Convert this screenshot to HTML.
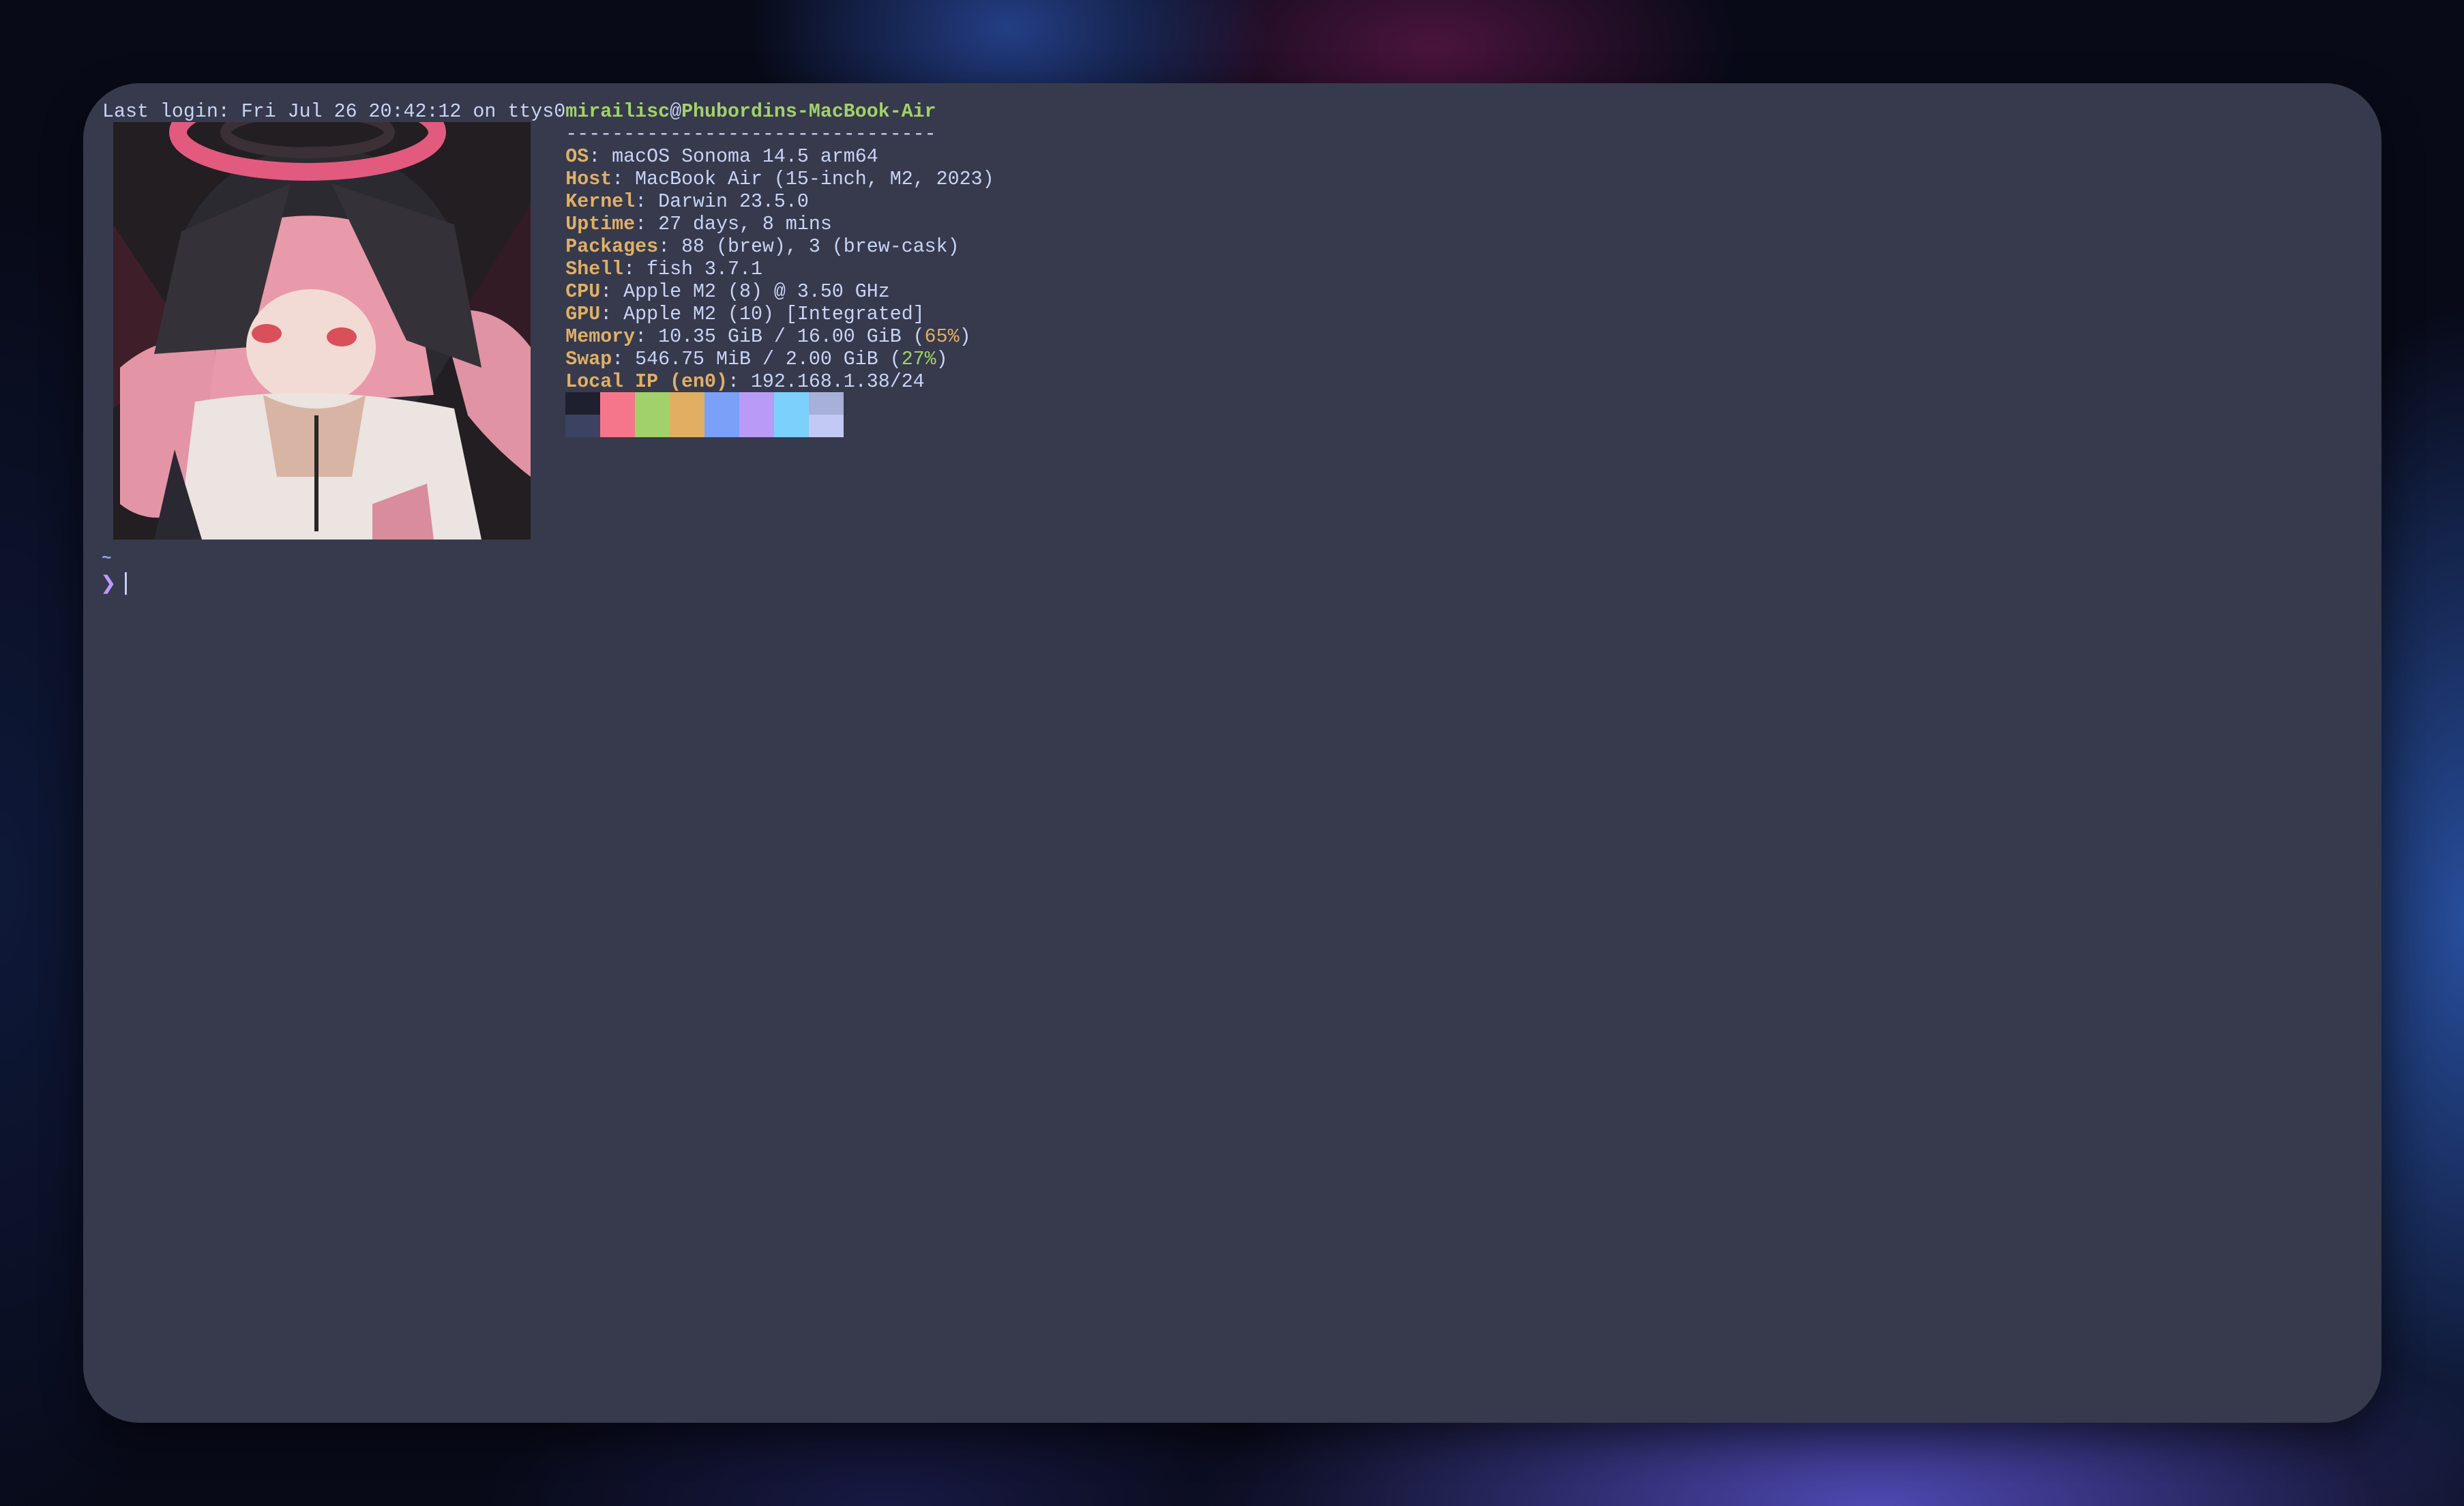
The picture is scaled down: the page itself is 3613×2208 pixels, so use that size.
<!DOCTYPE html>
<html><head><meta charset="utf-8"><style>
html,body{margin:0;padding:0;width:3613px;height:2208px;overflow:hidden;background:#080a18;}
.bg{position:absolute;inset:0;background:
radial-gradient(ellipse 380px 260px at 1480px 40px,rgba(45,80,170,.75),transparent),
radial-gradient(ellipse 450px 240px at 2100px 70px,rgba(110,25,80,.65),transparent),
radial-gradient(ellipse 320px 900px at 3613px 1350px,rgba(45,90,180,.85),transparent),
radial-gradient(ellipse 1000px 320px at 2750px 2208px,rgba(85,80,195,.9),transparent),
radial-gradient(ellipse 600px 220px at 1300px 2208px,rgba(40,40,110,.5),transparent),
radial-gradient(ellipse 350px 1000px at 0px 1300px,rgba(20,40,90,.5),transparent),
#080a18;}
.win{position:absolute;left:122px;top:122px;width:3370px;height:1964px;background:#363a4c;border-radius:82px;box-shadow:0 20px 60px rgba(0,0,0,.45);}
pre{position:absolute;left:150px;top:148px;margin:0;font-family:"Liberation Mono",monospace;font-size:28.3px;line-height:33px;color:#c8d3f5;}
.o{color:#e0af68;font-weight:bold}.g{color:#a3d16a;font-weight:bold}.gr{color:#a3d16a}.y{color:#e0af68}
.blk{position:absolute;width:51px;height:33px}
</style></head><body>
<div class="bg"></div>
<div class="win"></div>
<pre>Last login: Fri Jul 26 20:42:12 on ttys0<span class="g">mirailisc</span>@<span class="g">Phubordins-MacBook-Air</span>
                                        --------------------------------
                                        <span class="o">OS</span>: macOS Sonoma 14.5 arm64
                                        <span class="o">Host</span>: MacBook Air (15-inch, M2, 2023)
                                        <span class="o">Kernel</span>: Darwin 23.5.0
                                        <span class="o">Uptime</span>: 27 days, 8 mins
                                        <span class="o">Packages</span>: 88 (brew), 3 (brew-cask)
                                        <span class="o">Shell</span>: fish 3.7.1
                                        <span class="o">CPU</span>: Apple M2 (8) @ 3.50 GHz
                                        <span class="o">GPU</span>: Apple M2 (10) [Integrated]
                                        <span class="o">Memory</span>: 10.35 GiB / 16.00 GiB (<span class="y">65%</span>)
                                        <span class="o">Swap</span>: 546.75 MiB / 2.00 GiB (<span class="gr">27%</span>)
                                        <span class="o">Local IP (en0)</span>: 192.168.1.38/24</pre>
<div class="blk" style="left:829px;top:575px;background:#1e2030"></div>
<div class="blk" style="left:829px;top:608px;background:#3c4262"></div>
<div class="blk" style="left:880px;top:575px;height:66px;background:#f5768a"></div>
<div class="blk" style="left:931px;top:575px;height:66px;background:#a1d16a"></div>
<div class="blk" style="left:982px;top:575px;height:66px;background:#e0af62"></div>
<div class="blk" style="left:1033px;top:575px;height:66px;background:#7aa0f8"></div>
<div class="blk" style="left:1084px;top:575px;height:66px;background:#ba9af7"></div>
<div class="blk" style="left:1135px;top:575px;height:66px;background:#7bd0fc"></div>
<div class="blk" style="left:1186px;top:575px;background:#a7b0d8"></div>
<div class="blk" style="left:1186px;top:608px;background:#c2c9f4"></div>
<svg style="position:absolute;left:166px;top:179px" width="612" height="612" viewBox="0 0 612 612">
<rect width="612" height="612" fill="#221e21"/>
<path d="M0 150 L120 330 L0 420Z" fill="#4a1f2e" opacity=".7"/>
<path d="M612 120 L500 300 L612 420Z" fill="#3a1a28" opacity=".7"/>
<circle cx="300" cy="250" r="215" fill="#2b2a31"/>
<ellipse cx="285" cy="15" rx="190" ry="58" fill="none" stroke="#e35a7f" stroke-width="26"/>
<ellipse cx="285" cy="15" rx="120" ry="30" fill="none" stroke="#3a3035" stroke-width="16"/>
<path d="M10 360 Q80 300 150 330 L130 560 Q60 600 10 560Z" fill="#e395a6"/>
<path d="M480 280 Q560 260 612 330 L612 520 Q560 480 520 430Z" fill="#df93a4"/>
<path d="M170 160 Q300 110 430 170 L470 400 L140 420Z" fill="#e89aaa"/>
<path d="M100 160 L260 90 L200 330 L60 340Z" fill="#343238"/>
<path d="M320 90 L500 150 L540 360 L430 320Z" fill="#343238"/>
<ellipse cx="290" cy="330" rx="95" ry="85" fill="#f2dbd5"/>
<ellipse cx="225" cy="310" rx="22" ry="14" fill="#d9505a"/>
<ellipse cx="335" cy="315" rx="22" ry="14" fill="#d9505a"/>
<path d="M120 410 Q300 380 500 420 L540 612 L95 612Z" fill="#ebe4e1"/>
<path d="M220 400 Q300 440 370 400 L350 520 L240 520Z" fill="#d8b4a4"/>
<path d="M298 430 L298 600" stroke="#2a2628" stroke-width="6"/>
<path d="M90 480 L60 612 L130 612Z" fill="#2a2830"/>
<path d="M380 560 L460 530 L470 612 L380 612Z" fill="#d98c9c"/>
</svg>
<div style="position:absolute;left:149px;top:806px;font-family:'Liberation Mono',monospace;font-size:24px;color:#82aaff;font-weight:bold">~</div>
<div style="position:absolute;left:147px;top:838px;font-family:'DejaVu Sans',sans-serif;font-size:28px;line-height:33px;color:#c099ff;font-weight:bold">❯</div>
<div style="position:absolute;left:183px;top:839px;width:3px;height:33px;background:#c8ccf5"></div>
</body></html>
